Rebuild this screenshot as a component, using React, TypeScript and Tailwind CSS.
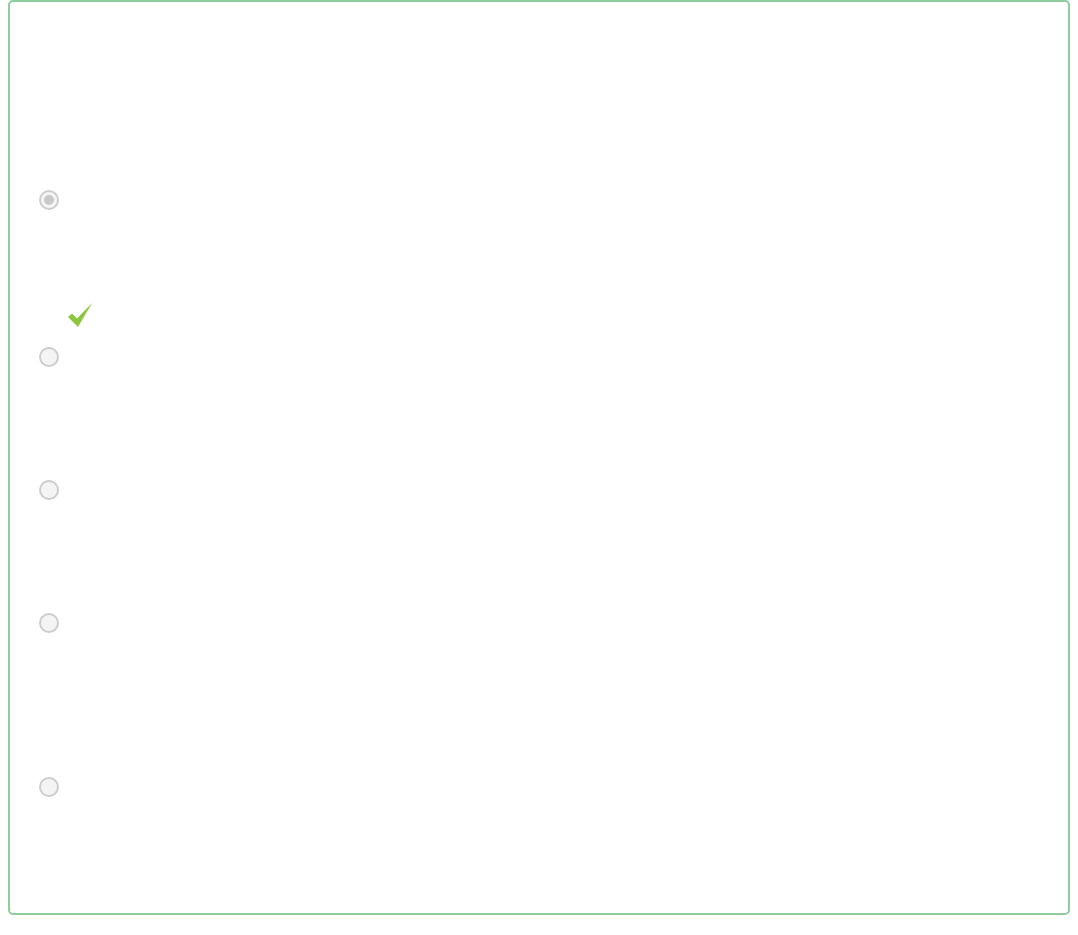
// Quiz answer card: one disabled-checked radio, a correct mark, four empty radios.

function Radio({ checked = false, className = "" }: { checked?: boolean; className?: string }) {
  return (
    <span
      className={`flex h-[20px] w-[20px] items-center justify-center rounded-full border-2 border-[#cdcdcd] bg-[#f4f4f4] ${className}`}
    >
      {checked ? <span className="h-[10px] w-[10px] rounded-full bg-[#c9c9c9]" /> : null}
    </span>
  );
}

function CheckMark({ className = "" }: { className?: string }) {
  return (
    <svg width="25" height="24" viewBox="0 0 25 24" className={className}>
      <path d="M1 14 L5 10.5 L10 15.5 L25 0 L11 24 Z" fill="#8cc63f" />
    </svg>
  );
}

export default function App() {
  return (
    <div className="min-h-[935px] bg-white px-2 font-['Liberation_Sans',sans-serif]">
      <div className="flex h-[915px] flex-col rounded-[5px] border-2 border-[#8fcd9c] px-[29px]">
        <Radio checked className="mt-[188px]" />
        <CheckMark className="ml-[28px] mt-[93px]" />
        <Radio className="mt-[20px]" />
        <Radio className="mt-[113px]" />
        <Radio className="mt-[113px]" />
        <Radio className="mt-[144px]" />
      </div>
    </div>
  );
}
